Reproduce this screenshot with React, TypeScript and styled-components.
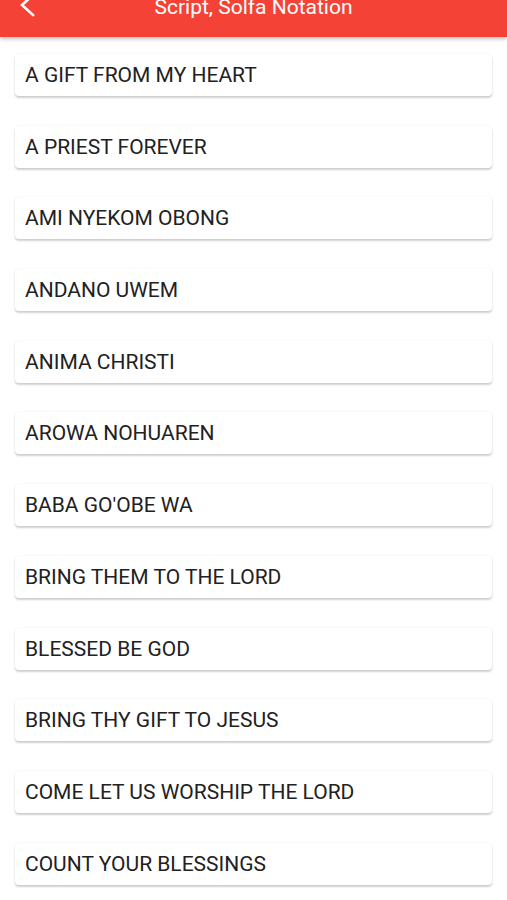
import React from 'react';
import styled, { createGlobalStyle } from 'styled-components';

const GlobalStyle = createGlobalStyle`
  html, body {
    margin: 0;
    padding: 0;
    background: #ffffff;
    font-family: Roboto, "Noto Sans", sans-serif;
  }
`;

const Page = styled.div`
  width: 100%;
  min-height: 900px;
  background: #ffffff;
  overflow: hidden;
`;

const Header = styled.div`
  position: relative;
  display: flex;
  align-items: center;
  justify-content: center;
  height: 37px;
  padding-bottom: 24px;
  box-sizing: border-box;
  background-color: #f44336;
  box-shadow: 0 2px 4px rgba(0, 0, 0, 0.25);
  z-index: 1;
  overflow: visible;
`;

const BackButton = styled.div`
  position: absolute;
  left: 18px;
  top: -7px;
  width: 18px;
  height: 24px;
  display: flex;
`;

const Title = styled.span`
  color: #ffffff;
  font-size: 21px;
  line-height: 24px;
  font-weight: 400;
  white-space: nowrap;
`;

const List = styled.div`
  display: flex;
  flex-direction: column;
  gap: 29.7px;
  padding: 17px 15px 0;
`;

const Card = styled.div`
  display: flex;
  align-items: center;
  height: 42px;
  padding: 0 10px;
  box-sizing: border-box;
  background: #ffffff;
  border-radius: 4px;
  box-shadow: 0 2px 2px rgba(0, 0, 0, 0.18), 0 0 2px rgba(0, 0, 0, 0.08);
  font-size: 21px;
  color: #212121;
`;

const songs = [
  'A GIFT FROM MY HEART',
  'A PRIEST FOREVER',
  'AMI NYEKOM OBONG',
  'ANDANO UWEM',
  'ANIMA CHRISTI',
  'AROWA NOHUAREN',
  "BABA GO'OBE WA",
  'BRING THEM TO THE LORD',
  'BLESSED BE GOD',
  'BRING THY GIFT TO JESUS',
  'COME LET US WORSHIP THE LORD',
  'COUNT YOUR BLESSINGS',
];

const App = () => {
  return (
    <Page>
      <GlobalStyle />
      <Header>
        <BackButton>
          <svg width="18" height="24" viewBox="0 0 18 24">
            <path d="M15 2 L4 12 L15 22" fill="none" stroke="#ffffff" strokeWidth="2.6" strokeLinecap="square" />
          </svg>
        </BackButton>
        <Title>Script, Solfa Notation</Title>
      </Header>
      <List>
        {songs.map((s) => (
          <Card key={s}>{s}</Card>
        ))}
      </List>
    </Page>
  );
};

export default App;
